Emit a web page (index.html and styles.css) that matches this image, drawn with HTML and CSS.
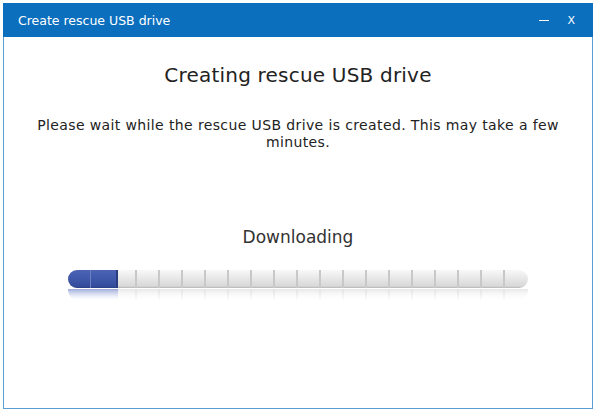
FILE: index.html
```html
<!DOCTYPE html>
<html>
<head>
<meta charset="utf-8">
<link rel="stylesheet" href="styles.css">
</head>
<body>
<div class="window">
  <div class="titlebar">
    <span class="title">Create rescue USB drive</span>
    <div class="controls">
      <span class="min"></span>
      <span class="close">X</span>
    </div>
  </div>
  <div class="content">
    <h1 class="heading">Creating rescue USB drive</h1>
    <p class="desc">Please wait while the rescue USB drive is created. This may take a few minutes.</p>
    <div class="status">Downloading</div>
    <div class="progress">
      <div class="bar">
        <div class="segs">
          <span></span><span></span><span></span><span></span><span></span>
          <span></span><span></span><span></span><span></span><span></span>
          <span></span><span></span><span></span><span></span><span></span>
          <span></span><span></span><span></span><span></span><span></span>
        </div>
        <div class="fill" style="width:50px"><span></span><span></span></div>
      </div>
      <div class="reflect">
        <div class="segs">
          <span></span><span></span><span></span><span></span><span></span>
          <span></span><span></span><span></span><span></span><span></span>
          <span></span><span></span><span></span><span></span><span></span>
          <span></span><span></span><span></span><span></span><span></span>
        </div>
        <div class="fill" style="width:50px"></div>
      </div>
    </div>
  </div>
</div>
</body>
</html>
```
FILE: styles.css
```css
html, body {
  margin: 0;
  padding: 0;
  background: #ffffff;
}
body {
  padding: 3px 0 0 3px;
  font-family: "DejaVu Sans", Verdana, sans-serif;
  color: #222222;
}
.window {
  width: 588px;
  height: 405px;
  border: 1px solid #5a9fd2;
  border-top: none;
  background: #ffffff;
  display: flex;
  flex-direction: column;
}
.titlebar {
  height: 34px;
  margin: 0 -1px;
  background: #0b6fbe;
  display: flex;
  align-items: center;
  justify-content: space-between;
  color: #ffffff;
}
.title {
  font-size: 12.5px;
  padding-left: 15px;
  padding-top: 1px;
}
.controls {
  display: flex;
  align-items: center;
  padding-right: 18px;
}
.min {
  width: 10px;
  height: 1px;
  background: #ffffff;
  margin-right: 18px;
  margin-top: 1px;
}
.close {
  font-size: 11px;
  font-family: "DejaVu Sans", sans-serif;
  line-height: 1;
}
.content {
  display: flex;
  flex-direction: column;
  align-items: center;
  padding-top: 26px;
}
.heading {
  margin: 0;
  font-size: 20px;
  font-weight: normal;
  line-height: 24px;
  letter-spacing: 0.2px;
  color: #222222;
}
.desc {
  margin: 30px 0 0;
  width: 560px;
  text-align: center;
  font-size: 14px;
  letter-spacing: 0.38px;
  line-height: 17px;
  color: #222222;
}
.status {
  margin-top: 76px;
  font-size: 17px;
  line-height: 20px;
  color: #333333;
}
.progress {
  margin-top: 23px;
  width: 460px;
}
.bar {
  position: relative;
  height: 18px;
  border-radius: 9px;
  overflow: hidden;
  background: linear-gradient(#f8f8f8, #e8e8e8 45%, #d8d8d8 90%, #b4b4b4);
}
.segs {
  display: flex;
  height: 100%;
}
.segs span {
  flex: 0 0 23px;
  box-sizing: border-box;
  border-right: 2px solid #c8c8c8;
}
.segs span:last-child {
  border-right: none;
}
.fill {
  position: absolute;
  left: 0;
  top: 0;
  height: 100%;
  display: flex;
  background: linear-gradient(#4c63b4, #3f58a9 50%, #344c9c 90%, #2a3f85);
}
.fill span {
  flex: 0 0 23px;
  box-sizing: border-box;
  border-right: 1px solid #6b7fc2;
}
.fill span:last-child {
  flex: 0 0 27px;
  border-right: 2px solid #2b3e82;
}
.reflect {
  position: relative;
  height: 11px;
  margin-top: 1px;
  border-radius: 0 0 9px 9px;
  overflow: hidden;
  background: linear-gradient(#e8e8e8, #f6f6f6 60%, #ffffff);
  -webkit-mask-image: linear-gradient(#000, rgba(0,0,0,0.1));
  mask-image: linear-gradient(#000, rgba(0,0,0,0.1));
}
.reflect .segs span {
  border-right-color: #e2e2e2;
}
.reflect .fill {
  background: linear-gradient(#9eabd8, #c8d0ec 60%, #f2f4fb);
  border-radius: 0 0 0 9px;
}
```
